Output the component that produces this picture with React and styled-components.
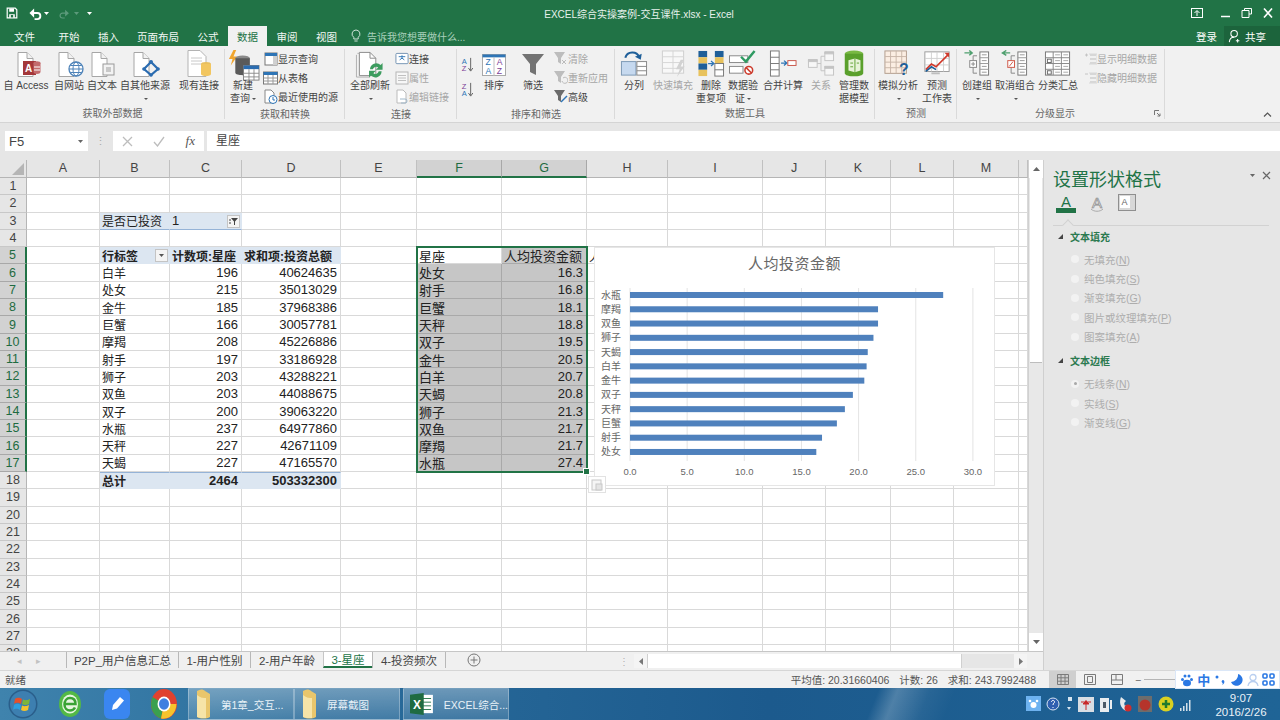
import React from 'react'
import styled, { createGlobalStyle } from 'styled-components'

const Global = createGlobalStyle`
    html, body { margin: 0; padding: 0; background: #e6e6e6; }
    body { font-family: "Liberation Sans", "Noto Sans CJK SC", sans-serif; }
    #root { width: 1280px; height: 720px; overflow: hidden; }
    svg { display: block; }
`

const Page = styled.div`
    width: 1280px;
    height: 720px;
    display: flex;
    flex-direction: column;
    overflow: hidden;
    position: relative;
    color: #262626;
`

// title bar
const TitleBar = styled.header`
    height: 26px;
    flex: none;
    background: #217346;
    display: flex;
    align-items: center;
    color: #fff;
    position: relative;
`
const Quick = styled.div`
    width: 539px;
    flex: none;
    display: flex;
    align-items: center;
    padding-left: 6px;
    box-sizing: border-box;
`
const QuickGap = styled.span`
    width: ${p => p.$w}px;
    flex: none;
`
const DocTitle = styled.div`
    font-size: 10px;
    width: 200px;
    flex: none;
    text-align: center;
    white-space: nowrap;
    color: #e8f1ec;
`
const WinButtons = styled.div`
    margin-left: auto;
    display: flex;
    align-items: center;
    gap: 8px;
    padding-right: 5px;
    & > svg:first-child { margin-right: 6px; }
`

// tabs
const TabRow = styled.nav`
    height: 20px;
    flex: none;
    background: #217346;
    display: flex;
    align-items: stretch;
    color: #fff;
    font-size: 10.5px;
`
const Tab = styled.div`
    width: ${p => p.$w}px;
    display: flex;
    align-items: center;
    justify-content: center;
    background: ${p => (p.$active ? '#f1f1f1' : 'transparent')};
    color: ${p => (p.$active ? '#217346' : '#f2f7f4')};
`
const Tell = styled.div`
    display: flex;
    align-items: center;
    gap: 6px;
    padding-left: 5px;
    font-size: 10px;
    color: #a9d0bb;
`
const TabRight = styled.div`
    margin-left: auto;
    display: flex;
    align-items: stretch;
`
const Login = styled.div`
    display: flex;
    align-items: center;
    padding-right: 7px;
`
const Share = styled.div`
    width: 56px;
    display: flex;
    align-items: center;
    gap: 3px;
    padding-left: 4px;
    box-sizing: border-box;
    background: #1c643c;
`

// ribbon
const Ribbon = styled.div`
    height: 76px;
    flex: none;
    background: #f1f1f1;
    display: flex;
    border-bottom: 1px solid #d4d4d4;
    box-sizing: content-box;
    font-size: 10px;
    color: #444;
    position: relative;
`
const Group = styled.section`
    width: ${p => p.$w}px;
    box-sizing: border-box;
    display: flex;
    flex-direction: column;
    position: relative;
    &::after {
        content: '';
        position: absolute;
        right: 0;
        top: 3px;
        bottom: 3px;
        width: 1px;
        background: #dadada;
    }
`
const GroupBody = styled.div`
    flex: 1;
    display: flex;
    align-items: flex-start;
`
const GroupLabel = styled.div`
    height: 17px;
    line-height: 18px;
    text-align: center;
    color: #666;
    flex: none;
    padding-right: ${p => p.$pr || 0}px;
`
const Big = styled.div`
    width: ${p => p.$w}px;
    flex: none;
    display: flex;
    flex-direction: column;
    align-items: center;
    padding-top: 4px;
    margin-left: ${p => p.$ml || 0}px;
    color: ${p => (p.$off ? '#a6a6a6' : '#444')};
`
const BigIcon = styled.div`
    height: 29px;
    display: flex;
    align-items: ${p => (p.$mid ? 'center' : 'flex-start')};
    justify-content: center;
`
const BigLabel = styled.div`
    line-height: 13px;
    text-align: center;
    white-space: nowrap;
`
const Caret = styled.span`
    display: inline-block;
    width: 0;
    height: 0;
    border-left: 2px solid transparent;
    border-right: 2px solid transparent;
    border-top: 2px solid #555;
    vertical-align: middle;
    margin-left: 2px;
`
const SmallCol = styled.div`
    display: flex;
    flex-direction: column;
    padding-top: 3px;
    margin-left: ${p => p.$ml || 0}px;
`
const Small = styled.div`
    height: 19px;
    display: flex;
    align-items: center;
    white-space: nowrap;
    color: ${p => (p.$off ? '#a6a6a6' : '#444')};
`
const SmallIcon = styled.div`
    width: ${p => p.$w || 15}px;
    flex: none;
    display: flex;
    justify-content: center;
`
const SortCol = styled.div`
    width: 21px;
    margin-left: 0;
    flex: none;
    display: flex;
    flex-direction: column;
    align-items: center;
    gap: 10px;
    padding-top: 11px;
`
const Collapse = styled.div`
    position: absolute;
    right: 8px;
    bottom: 5px;
`
const Launch = styled.div`
    position: absolute;
    right: 4px;
    bottom: 5px;
`

// formula bar
const FormulaBar = styled.div`
    height: 28px;
    flex: none;
    margin-top: 2px;
    background: #e6e6e6;
    display: flex;
    align-items: center;
    padding: 4px 0 0 5px;
    box-sizing: border-box;
    font-size: 13px;
`
const NameBox = styled.div`
    width: 83px;
    height: 20px;
    background: #fff;
    box-sizing: border-box;
    display: flex;
    align-items: center;
    justify-content: space-between;
    padding: 0 5px 0 4px;
    color: #444;
`
const Grip = styled.div`
    width: 25px;
    color: #aaa;
    font-size: 11px;
    text-align: center;
`
const FxBox = styled.div`
    width: 91px;
    height: 20px;
    background: #fff;
    display: flex;
    align-items: center;
    justify-content: space-between;
    padding: 0 9px;
    box-sizing: border-box;
    color: #555;
`
const Fx = styled.i`
    font-family: "Liberation Serif", serif;
    font-size: 13px;
`
const FormulaInput = styled.div`
    flex: 1;
    height: 20px;
    line-height: 20px;
    margin-left: 3px;
    padding-left: 9px;
    background: #fff;
    color: #444;
    font-size: 12px;
`

// work area
const Work = styled.div`
    flex: 1;
    display: flex;
    min-height: 0;
    padding-top: 7px;
    background: #e6e6e6;
`
const LeftCol = styled.div`
    width: 1043px;
    display: flex;
    flex-direction: column;
    flex: none;
`
const SheetRow = styled.div`
    height: 492px;
    flex: none;
    display: flex;
    border-bottom: 1px solid #c6c6c6;
    box-sizing: border-box;
    background: #fff;
`
const columns = '27px 73px 70px 72px 99px 76px 85px 85px 81px 95px 63px 65px 63px 65px 9px'
const rowsTpl = 'repeat(1, 18px) repeat(28, 17.3px)'
const SheetArea = styled.div`
    width: 1028px;
    height: 100%;
    position: relative;
    overflow: hidden;
`
const Cells = styled.div`
    display: grid;
    grid-template-columns: ${columns};
    grid-template-rows: ${rowsTpl};
    font-size: 13px;
`
const Overlay = styled.div`
    position: absolute;
    inset: 0;
    display: grid;
    grid-template-columns: ${columns};
    grid-template-rows: ${rowsTpl};
    pointer-events: none;
`
const Corner = styled.div`
    background: #e6e6e6;
    border-right: 1px solid #b5b5b5;
    border-bottom: 1px solid #b5b5b5;
    box-sizing: border-box;
    display: flex;
    align-items: flex-end;
    justify-content: flex-end;
    padding: 0 2px 2px 0;
`
const ColHead = styled.div`
    background: ${p => (p.$on ? '#d2d2d2' : '#e6e6e6')};
    border-right: 1px solid ${p => (p.$on ? '#a8a8a8' : '#c0c0c0')};
    border-bottom: ${p => (p.$on ? '2px solid #217346' : '1px solid #b5b5b5')};
    box-sizing: border-box;
    text-align: center;
    line-height: 17px;
    font-size: 12.5px;
    color: ${p => (p.$on ? '#1e6b41' : '#444')};
`
const RowHead = styled.div`
    background: ${p => (p.$on ? '#d2d2d2' : '#e6e6e6')};
    border-right: ${p => (p.$on ? '2px solid #217346' : '1px solid #b5b5b5')};
    border-bottom: 1px solid ${p => (p.$on ? '#a8a8a8' : '#c8c8c8')};
    box-sizing: border-box;
    display: flex;
    align-items: center;
    justify-content: center;
    font-size: 12.5px;
    color: ${p => (p.$on ? '#1e6b41' : '#444')};
`
const cellBg = { plain: '#fff', pivot: '#dce6f1', sel: '#c6c6c6' }
const Cell = styled.div`
    box-sizing: border-box;
    position: relative;
    min-width: 0;
    white-space: nowrap;
    display: flex;
    align-items: center;
    justify-content: ${p => (p.$right ? 'flex-end' : 'flex-start')};
    padding: 0 3px 0 2px;
    background: ${p => cellBg[p.$kind || 'plain']};
    font-weight: ${p => (p.$bold ? 700 : 400)};
    font-size: ${p => (p.$small ? '12px' : 'inherit')};
    border-right: 1px solid ${p => (p.$kind === 'sel' ? '#a9a9a9' : p.$kind === 'pivot' ? '#dce6f1' : '#d9d9d9')};
    border-bottom: 1px solid ${p => (p.$line ? '#95b3d7' : p.$kind === 'sel' ? '#a9a9a9' : p.$kind === 'pivot' ? '#dce6f1' : '#d9d9d9')};
    border-top: ${p => (p.$top ? '1px solid #95b3d7' : 'none')};
    color: #222;
`
const DropBtn = styled.span`
    position: absolute;
    right: 1px;
    top: 2px;
    width: 13px;
    height: 13px;
    box-sizing: border-box;
    background: #f4f4f4;
    border: 1px solid #c4c4c4;
    display: flex;
    align-items: center;
    justify-content: center;
`
const Selection = styled.div`
    grid-column: 7 / 9;
    grid-row: 6 / 19;
    border: 2px solid #217346;
    margin: -1px -1px -1px -1px;
    position: relative;
`
const Handle = styled.div`
    position: absolute;
    right: -4px;
    bottom: -4px;
    width: 5px;
    height: 5px;
    background: #217346;
    border: 1px solid #fff;
`
const ChartBox = styled.div`
    position: absolute;
    left: 594px;
    top: 87px;
    width: 401px;
    height: 239px;
    box-sizing: border-box;
    background: #fff;
    border: 1px solid #e6e6e6;
`
const ChartTitle = styled.div`
    height: 31px;
    padding-top: 4px;
    box-sizing: border-box;
    text-align: center;
    font-size: 15px;
    letter-spacing: 0.5px;
    color: #686868;
`
const PasteTag = styled.div`
    position: absolute;
    left: 588px;
    top: 316px;
    width: 18px;
    height: 17px;
    box-sizing: border-box;
    background: #fff;
    border: 1px solid #e2e2e2;
    display: flex;
    align-items: center;
    justify-content: center;
`
const VScroll = styled.div`
    width: 15px;
    flex: none;
    display: flex;
    flex-direction: column;
    background: #e8e8e8;
    border-left: 1px solid #d0d0d0;
    box-sizing: border-box;
`
const ScrollEnd = styled.div`
    height: 18px;
    flex: none;
    display: flex;
    align-items: center;
    justify-content: center;
    background: #fff;
    margin-top: ${p => (p.$end ? 'auto' : 0)};
`
const VThumb = styled.div`
    height: 184px;
    background: #fff;
    margin: 0 1px;
    border-bottom: 1px solid #bdbdbd;
`

// sheet tabs
const TabStrip = styled.div`
    flex: 1;
    display: flex;
    align-items: stretch;
    background: #f0f0f0;
    font-size: 11.5px;
    color: #444;
`
const StripNav = styled.div`
    width: 66px;
    display: flex;
    align-items: center;
    gap: 14px;
    padding-left: 17px;
    box-sizing: border-box;
    color: #c2c2c2;
    font-size: 9px;
`
const SheetTab = styled.div`
    width: ${p => p.$w}px;
    height: 16px;
    display: flex;
    align-items: center;
    justify-content: center;
    box-sizing: border-box;
    white-space: nowrap;
    background: ${p => (p.$active ? '#fff' : 'transparent')};
    color: ${p => (p.$active ? '#217346' : '#444')};
    border-left: 1px solid ${p => (p.$active ? '#c6c6c6' : '#b8b8b8')};
    border-bottom: ${p => (p.$active ? '2px solid #217346' : 'none')};
`
const AddSheet = styled.div`
    width: 57px;
    display: flex;
    align-items: center;
    justify-content: center;
    border-left: 1px solid #b8b8b8;
    height: 16px;
    box-sizing: border-box;
`
const Dots = styled.div`
    margin-left: 112px;
    width: 20px;
    display: flex;
    align-items: center;
    justify-content: center;
    color: #b0b0b0;
    font-size: 10px;
`
const HScroll = styled.div`
    width: 393px;
    margin: 2px 0 2px;
    display: flex;
    align-items: stretch;
    background: #e6e6e6;
`
const HEnd = styled.div`
    width: 13px;
    flex: none;
    display: flex;
    align-items: center;
    justify-content: center;
    background: #f4f4f4;
    margin-left: ${p => (p.$end ? 'auto' : 0)};
`
const HThumb = styled.div`
    width: 315px;
    background: #fff;
    border-left: 1px solid #d0d0d0;
    border-right: 1px solid #d0d0d0;
    box-sizing: border-box;
`

// task pane
const Pane = styled.aside`
    flex: 1;
    background: #e6e6e6;
    border-left: 1px solid #cfcfcf;
    box-sizing: border-box;
    padding: 8px 0 0 9px;
    font-size: 10.5px;
    position: relative;
`
const PaneTitle = styled.h2`
    margin: 0;
    font-size: 18px;
    line-height: 24px;
    font-weight: 400;
    color: #217346;
`
const PaneTools = styled.div`
    position: absolute;
    right: 9px;
    top: 11px;
    display: flex;
    align-items: center;
    gap: 7px;
`
const PaneTabs = styled.div`
    display: flex;
    align-items: flex-start;
    gap: 14px;
    padding: 0 0 0 3px;
    height: 33px;
    box-sizing: border-box;
    margin-top: 1px;
    border-bottom: 1px solid #d2d2d2;
    width: 216px;
    position: relative;
`
const PaneNotch = styled.div`
    position: absolute;
    left: 11px;
    bottom: -4px;
    width: 7px;
    height: 7px;
    background: #e6e6e6;
    border-left: 1px solid #d2d2d2;
    border-top: 1px solid #d2d2d2;
    transform: rotate(45deg);
`
const Section = styled.div`
    padding: 0 0 0 5px;
    margin-top: ${p => p.$mt}px;
`
const SectionHead = styled.div`
    height: 20px;
    margin-bottom: 3.5px;
    display: flex;
    align-items: center;
    gap: 7px;
    font-weight: 700;
    font-size: 10px;
    color: #2b7a50;
`
const Tri = styled.span`
    width: 0;
    height: 0;
    border-left: 5px solid transparent;
    border-bottom: 5px solid #444;
`
const RadioRow = styled.div`
    height: 19.4px;
    display: flex;
    align-items: center;
    gap: 5px;
    padding-left: 13px;
    color: #adadad;
    white-space: nowrap;
`
const Radio = styled.span`
    width: 8px;
    height: 8px;
    border-radius: 50%;
    background: #f2f2f2;
    display: flex;
    align-items: center;
    justify-content: center;
    &::after {
        content: '';
        width: 3px;
        height: 3px;
        border-radius: 50%;
        background: ${p => (p.$on ? '#a8a8a8' : 'transparent')};
    }
`
const Key = styled.u`
    text-underline-offset: 1px;
`

// status bar
const StatusBar = styled.footer`
    height: 17px;
    flex: none;
    background: #f1f1f1;
    border-top: 1px solid #d6d6d6;
    box-sizing: content-box;
    display: flex;
    align-items: center;
    font-size: 10.5px;
    color: #555;
    position: relative;
`
const Ready = styled.div`
    padding-left: 5px;
`
const Stats = styled.div`
    margin-left: auto;
    display: flex;
    gap: 10px;
    white-space: nowrap;
`
const ViewBtns = styled.div`
    display: flex;
    margin-left: 13px;
    width: 231px;
    align-self: stretch;
    align-items: stretch;
`
const ViewBtn = styled.div`
    width: 27px;
    display: flex;
    align-items: center;
    justify-content: center;
    background: ${p => (p.$on ? '#cfcfcf' : 'transparent')};
`
const Zoom = styled.div`
    display: flex;
    align-items: center;
    padding-left: 5px;
    gap: 3px;
    color: #666;
`
const ZoomLine = styled.div`
    width: 33px;
    height: 1px;
    background: #b5b5b5;
`
const Ime = styled.div`
    position: absolute;
    right: 0;
    top: -1px;
    width: 105px;
    height: 19px;
    background: #fff;
    box-sizing: border-box;
    border: 1px solid #dbe7f7;
    display: flex;
    align-items: center;
    justify-content: space-around;
    padding: 0 2px;
    color: #2a78e4;
    font-size: 13px;
    font-weight: 700;
`

// taskbar
const Taskbar = styled.div`
    height: 32px;
    flex: none;
    display: flex;
    align-items: stretch;
    background:
        linear-gradient(112deg, transparent 68%, rgba(255, 255, 255, 0.22) 69.5%, rgba(255, 255, 255, 0.05) 72%, transparent 74%),
        linear-gradient(90deg, #3f83ad 0%, #2a6c9b 25%, #1c5a8d 60%, #1f6496 100%);
    color: #fff;
    font-size: 10.5px;
`
const Pinned = styled.div`
    width: ${p => p.$w}px;
    display: flex;
    align-items: center;
    justify-content: center;
    flex: none;
`
const TaskBtn = styled.div`
    width: ${p => p.$w}px;
    margin-left: ${p => p.$ml || 0}px;
    flex: none;
    display: flex;
    align-items: center;
    gap: 10px;
    padding-left: ${p => p.$pl}px;
    box-sizing: border-box;
    background: linear-gradient(180deg, rgba(255, 255, 255, 0.32), rgba(255, 255, 255, 0.12));
    border: 1px solid rgba(255, 255, 255, 0.28);
    white-space: nowrap;
    color: #e9f2f8;
`
const Tray = styled.div`
    margin-left: auto;
    display: flex;
    align-items: center;
    gap: 5px;
`
const Clock = styled.div`
    width: 78px;
    text-align: center;
    font-size: 11.5px;
    line-height: 14.5px;
    padding-top: 2px;
    margin-left: 6px;
    color: #eaf2f8;
`

// icons
const Save = () => (
    <svg width="12" height="12" viewBox="0 0 15 15"><path d="M1.500 1.500h10l2 2v10h-12z" fill="none" stroke="#fff" strokeWidth="1.500"/><path d="M4 2h6v4H4zM4 9h7v4.500H4z" fill="#fff"/><path d="M6 10h3v3H6z" fill="#217346"/></svg>
)
const Undo = ({ c = '#fff' }) => (
    <svg width="15" height="13" viewBox="0 0 16 14"><path d="M3 6.500h7a3.200 3.200 0 0 1 0 6.500H7" fill="none" stroke={c} strokeWidth="2"/><path d="M6.500 1.500L1.500 6.500l5 5z" fill={c}/></svg>
)
const Redo = ({ c = '#5c9a7b' }) => (
    <svg width="12" height="11" viewBox="0 0 16 14"><path d="M13 6.500H6a3.200 3.200 0 0 0 0 6.500h3" fill="none" stroke={c} strokeWidth="1.600"/><path d="M9.500 2l5 4.500-5 4.500z" fill={c}/></svg>
)
const TinyCaret = ({ c = '#fff' }) => (
    <svg width="5" height="3" viewBox="0 0 5 3"><path d="M0 0h5L2.500 3z" fill={c}/></svg>
)
const Bulb = () => (
    <svg width="10" height="14" viewBox="0 0 10 14"><path d="M5 1a4 4 0 0 0-2.200 7.300V10h4.400V8.300A4 4 0 0 0 5 1zM3.400 12h3.200" fill="none" stroke="#cfe3d8"/></svg>
)
const ShareUser = () => (
    <svg width="14" height="14" viewBox="0 0 16 16"><circle cx="7" cy="5.500" r="3.700" fill="none" stroke="#fff" strokeWidth="1.200"/><path d="M1.500 15c.3-3.500 2.500-5.500 5.500-5.500M11 11.500v4M9 13.500h4" fill="none" stroke="#fff" strokeWidth="1.200"/></svg>
)
const Page32 = ({ children, w = 32 }) => (
    <svg width={w} height="27" viewBox={`0 0 ${w} 27`}>
        <path d="M8 2.500h9l6 6v18H8z" fill="#fff" stroke="#a6a6a6"/>
        <path d="M17 2.500v6h6" fill="#f2f2f2" stroke="#a6a6a6"/>
        {children}
    </svg>
)
const AccessIcon = () => (
    <Page32>
        <rect x="13" y="11" width="13" height="14" fill="#a4373a"/>
        <text x="15" y="22" fontSize="10" fontWeight="700" fill="#fff" fontFamily="Liberation Sans">A</text>
        <ellipse cx="27" cy="13" rx="3.500" ry="1.800" fill="#c36b6d"/>
        <path d="M23.500 13v9c0 2.500 7 2.500 7 0V13" fill="#c36b6d"/>
        <path d="M24 17h6M24 20h6" stroke="#fff"/>
    </Page32>
)
const WebIcon = () => (
    <Page32 w={36}>
        <circle cx="25" cy="19" r="7" fill="#fff" stroke="#4d82b8" strokeWidth="1.300"/>
        <ellipse cx="25" cy="19" rx="3" ry="7" fill="none" stroke="#4d82b8"/>
        <path d="M18 19h14M19.500 15.500h11M19.500 22.500h11" stroke="#4d82b8"/>
    </Page32>
)
const TextIcon = () => (
    <Page32 w={36}>
        <rect x="19" y="14" width="11" height="11" fill="#f3f3f3" stroke="#9a9a9a"/>
        <rect x="22" y="17" width="5" height="5" fill="#c8c8c8"/>
    </Page32>
)
const OtherIcon = () => (
    <Page32 w={38}>
        <path d="M25 12l7 7-7 6-7-6z" fill="none" stroke="#2b6cb0" strokeWidth="2.200"/>
        <circle cx="25" cy="12" r="2" fill="#2b6cb0"/><circle cx="25" cy="25" r="1.800" fill="#2b6cb0"/>
        <circle cx="18" cy="19" r="1.800" fill="#2b6cb0"/><circle cx="32" cy="19" r="1.800" fill="#2b6cb0"/>
    </Page32>
)
const ExistingIcon = () => (
    <svg width="30" height="27" viewBox="0 0 30 27">
        <path d="M4 0.500h12l6 6v20H4z" fill="#fff" stroke="#b3b3b3"/>
        <path d="M7 8h11M7 11h11M7 14h11" stroke="#c8c8c8"/>
        <ellipse cx="22" cy="14" rx="5" ry="2" fill="#e8bf5f"/>
        <path d="M17 14v10c0 2.700 10 2.700 10 0V14" fill="#f2c660"/>
    </svg>
)
const NewQueryIcon = () => (
    <svg width="33" height="31" viewBox="0 0 36 34">
        <path d="M7 0L2 10h4l-2 7 7-10H7l3-7z" fill="#f0a52d"/>
        <ellipse cx="17" cy="9" rx="8" ry="3" fill="#8a8a8a"/>
        <path d="M9 9v16c0 3.500 16 3.500 16 0V9" fill="#5a5a5a"/>
        <rect x="18" y="17" width="17" height="16" fill="#fff" stroke="#7d7d7d"/>
        <rect x="18" y="17" width="17" height="4" fill="#2b6cb0"/>
        <path d="M18 25.500h17M18 29.500h17M24 21v12M29.500 21v12" stroke="#8a8a8a"/>
    </svg>
)
const ShowQ = () => (
    <svg width="14" height="14" viewBox="0 0 14 14"><rect x="1" y="1" width="12" height="12" fill="#fff" stroke="#777"/><rect x="1" y="1" width="12" height="3" fill="#2e75b6"/><rect x="9" y="4" width="4" height="9" fill="#d0d0d0"/></svg>
)
const TableI = () => (
    <svg width="15" height="14" viewBox="0 0 15 14"><rect x="0.500" y="1" width="14" height="12" fill="#fff" stroke="#777"/><rect x="0.500" y="1" width="14" height="3" fill="#2e75b6"/><path d="M0.500 7h14M0.500 10h14M5 4v9M10 4v9" stroke="#999"/></svg>
)
const RecentI = () => (
    <svg width="15" height="15" viewBox="0 0 15 15"><path d="M2 1h6l3 3v10H2z" fill="#fff" stroke="#888"/><circle cx="10" cy="10.500" r="4" fill="#fff" stroke="#2e75b6"/><path d="M10 8v3h2" fill="none" stroke="#2e75b6"/></svg>
)
const RefreshIcon = () => (
    <svg width="34" height="29" viewBox="0 0 34 30">
        <path d="M6 2.500h11l6 6v18H6z" fill="#fff" stroke="#8a8a8a"/>
        <path d="M3 5v23h14M4 3.500h2" fill="none" stroke="#b0b0b0"/>
        <path d="M17 2.500v6h6" fill="none" stroke="#8a8a8a"/>
        <path d="M17 20a6.500 6.500 0 0 1 11-4.500l2-2v7h-7l2.500-2.500a3.500 3.500 0 0 0-5.500 2z" fill="#3d9c5f"/>
        <path d="M29 22a6.500 6.500 0 0 1-11 4.500l-2 2v-7h7l-2.500 2.500a3.500 3.500 0 0 0 5.500-2z" fill="#3d9c5f"/>
    </svg>
)
const ConnI = () => (
    <svg width="15" height="14" viewBox="0 0 15 14"><rect x="1" y="1" width="13" height="11" rx="1" fill="#fff" stroke="#6f8fb0"/><path d="M4 4.500h7M7.500 3v3.500M5 8l2.500-2L10 8" fill="none" stroke="#2e75b6"/></svg>
)
const PropI = () => (
    <svg width="14" height="14" viewBox="0 0 14 14"><rect x="1" y="1" width="12" height="12" fill="#f7f7f7" stroke="#b6b6b6"/><path d="M3 4.500h8M3 7h8M3 9.500h8" stroke="#c0c0c0"/></svg>
)
const EditLinkI = () => (
    <svg width="14" height="15" viewBox="0 0 14 15"><path d="M2 1h6l3 3v10H2z" fill="#fff" stroke="#bbb"/><path d="M5 10h5a2 2 0 0 1 0 4H6" fill="none" stroke="#9fb7c9"/></svg>
)
const SortI = ({ a, b, ca, cb }) => (
    <svg width="14" height="15" viewBox="0 0 14 17" fontFamily="Liberation Sans" fontSize="8.500">
        <text x="0" y="7.500" fill={ca}>{a}</text>
        <text x="0" y="16" fill={cb}>{b}</text>
        <path d="M10 1v14M7.500 12.500L10 16l2.500-3.500" fill="none" stroke="#555"/>
    </svg>
)
const SortBig = () => (
    <svg width="24" height="22" viewBox="0 0 25 23" fontFamily="Liberation Sans" fontSize="9">
        <rect x="0.500" y="0.500" width="24" height="22" fill="#fff" stroke="#a6a6a6"/>
        <rect x="0.500" y="0.500" width="24" height="3" fill="#2e75b6"/>
        <path d="M12.500 3v20" stroke="#bbb"/>
        <text x="3.500" y="12" fill="#2e75b6">Z</text><text x="3.500" y="21" fill="#2e75b6">A</text>
        <text x="15.500" y="12" fill="#7c3f98">A</text><text x="15.500" y="21" fill="#7c3f98">Z</text>
    </svg>
)
const FunnelBig = () => (
    <svg width="22" height="23" viewBox="0 0 22 23"><path d="M0 1h22L14 11v11l-6-3v-8z" fill="#737373"/></svg>
)
const FunnelS = ({ c = '#bdbdbd', mark }) => (
    <svg width="15" height="15" viewBox="0 0 15 15"><path d="M1 1h11L8 7v6l-3-2V7z" fill={c}/>{mark}</svg>
)
const SplitI = () => (
    <svg width="28" height="28" viewBox="0 0 28 29">
        <path d="M5 8c2-7 12-7 14-1" fill="none" stroke="#1f5f99" strokeWidth="2.200"/><path d="M15 7l6 3 1-6z" fill="#1f5f99"/>
        <rect x="1" y="12" width="15" height="14" fill="#c6d9ef" stroke="#7d99b5"/>
        <rect x="17" y="12" width="10" height="14" fill="#fff" stroke="#888"/>
        <path d="M17 17h10M17 21.500h10" stroke="#888"/>
    </svg>
)
const FlashI = () => (
    <svg width="28" height="28" viewBox="0 0 28 29">
        <rect x="3" y="1" width="22" height="23" fill="#f8f8f8" stroke="#cfcfcf"/>
        <path d="M3 7h22M3 13h22M3 19h22M14 1v23" stroke="#d6d6d6"/>
        <path d="M22 10l-5 10h4l-3 8 8-11h-4l3-7z" fill="#d2d2d2"/>
    </svg>
)
const DedupI = () => (
    <svg width="28" height="28" viewBox="0 0 28 29">
        <rect x="1" y="1" width="9" height="6.500" fill="#1f5f99"/><rect x="1" y="7.500" width="9" height="6.500" fill="#e8c25c"/>
        <rect x="1" y="14" width="9" height="6.500" fill="#1f5f99"/><rect x="1" y="20.500" width="9" height="6.500" fill="#e8c25c"/>
        <rect x="18" y="1" width="9" height="6.500" fill="#1f5f99"/><rect x="18" y="7.500" width="9" height="6.500" fill="#e8c25c"/>
        <rect x="18" y="14" width="9" height="13" fill="#fff" stroke="#777"/><path d="M18 20.500h9" stroke="#777"/>
        <path d="M11 14h5M14 11.500l3 2.500-3 2.500" fill="none" stroke="#2e75b6" strokeWidth="1.300"/>
    </svg>
)
const ValidI = () => (
    <svg width="30" height="28" viewBox="0 0 30 29">
        <rect x="1" y="6" width="19" height="7" fill="#fff" stroke="#888"/><rect x="1" y="17" width="14" height="7" fill="#fff" stroke="#888"/>
        <path d="M13 7l5 5 9-11" fill="none" stroke="#2f9a62" strokeWidth="2.500"/>
        <circle cx="21" cy="21" r="4" fill="#fff" stroke="#cc3b2c" strokeWidth="1.600"/><path d="M18 18l6 6" stroke="#cc3b2c" strokeWidth="1.600"/>
    </svg>
)
const MergeI = () => (
    <svg width="28" height="28" viewBox="0 0 28 29">
        <rect x="1" y="1" width="9" height="26" fill="#fff" stroke="#777"/><path d="M1 7.500h9M1 14h9M1 20.500h9" stroke="#777"/>
        <path d="M12 13.500h5M15 11l3 2.500-3 2.500" fill="none" stroke="#2e75b6" strokeWidth="1.300"/>
        <rect x="19" y="11" width="8.500" height="5" fill="#fff" stroke="#c8564a"/>
    </svg>
)
const RelI = () => (
    <svg width="28" height="28" viewBox="0 0 28 29" stroke="#c4c4c4" fill="#f7f7f7">
        <rect x="1" y="10" width="9" height="8"/><rect x="18" y="2" width="9" height="9"/><rect x="18" y="17" width="9" height="9"/>
        <path d="M10 14h4V6.500h4M14 14v7.500h4" fill="none"/>
        <path d="M1 10h9v2H1zM18 2h9v2h-9zM18 17h9v2h-9z" fill="#c4c4c4"/>
    </svg>
)
const ModelI = () => (
    <svg width="24" height="28" viewBox="0 0 26 30">
        <ellipse cx="13" cy="4" rx="10" ry="3.500" fill="#79b943"/>
        <path d="M3 4v21c0 4.500 20 4.500 20 0V4" fill="#5aa02c"/>
        <path d="M7 11l7-2 6 2v11l-6 2-7-2z" fill="#e7f3d9"/><path d="M14 9v15M9 14h3M9 18h3M16 14h2.500" stroke="#5aa02c"/>
    </svg>
)
const WhatIfI = () => (
    <svg width="30" height="28" viewBox="0 0 32 30" fontFamily="Liberation Sans">
        <rect x="2" y="1" width="23" height="24" fill="#fbeee3" stroke="#b09a8a"/>
        <path d="M2 7h23M2 13h23M2 19h23M8 1v24M14 1v24M20 1v24" stroke="#c7b5a8"/>
        <text x="17" y="27" fontSize="17" fontWeight="700" fill="#1f5f99">?</text>
    </svg>
)
const ForecastI = () => (
    <svg width="28" height="28" viewBox="0 0 28 30">
        <rect x="1" y="2" width="26" height="21" fill="#fff" stroke="#9a9a9a"/>
        <path d="M1 9h26M1 16h26M8 2v21M14 2v21M21 2v21" stroke="#d0d0d0"/>
        <path d="M2 21l6-6 5 3 13-13" fill="none" stroke="#d0392b" strokeWidth="1.800"/><path d="M2 23l6-5 5 3" fill="none" stroke="#1f5f99" strokeWidth="1.800"/>
        <path d="M22 3h5v5z" fill="#d0392b"/><path d="M8 24h9v2H8z" fill="#bdbdbd"/>
    </svg>
)
const OutlineCol = ({ x = 17 }) => (
    <g>
        <rect x={x} y="2" width="9" height="24" fill="#fff" stroke="#777"/>
        <path d={`M${x} 8h9M${x} 14h9M${x} 20h9M${x + 2} 5h5M${x + 2} 11h5M${x + 2} 17h5M${x + 2} 23h5`} stroke="#999"/>
    </g>
)
const GroupI = () => (
    <svg width="28" height="28" viewBox="0 0 28 29">
        <path d="M1 3h7M6 0.500L9 3 6 5.500" fill="none" stroke="#4fa06f" strokeWidth="1.500"/>
        <path d="M10 6h4M10 6v18h4" fill="none" stroke="#888"/>
        <rect x="6.500" y="11" width="7" height="7" fill="#fff" stroke="#888"/><path d="M8 14.500h4M10 12.500v4" stroke="#888"/>
        <OutlineCol/>
    </svg>
)
const UngroupI = () => (
    <svg width="28" height="28" viewBox="0 0 28 29">
        <path d="M9 3H2M5 0.500L1 3l4 2.500" fill="none" stroke="#4fa06f" strokeWidth="1.500"/>
        <path d="M10 6h4M10 6v18h4" fill="none" stroke="#888"/>
        <rect x="6.500" y="11" width="7" height="7" fill="#fff" stroke="#d05a4a"/><path d="M8 17l4-5" stroke="#d05a4a"/>
        <OutlineCol/>
    </svg>
)
const SubtotalI = () => (
    <svg width="28" height="28" viewBox="0 0 28 29">
        <rect x="1" y="2" width="25" height="24" fill="#fff" stroke="#777"/>
        <path d="M1 8h25M1 14h25M1 20h25M9 2v24M17.500 2v24" stroke="#888"/>
        <path d="M11 5h5M19.500 5h5M11 11h5M19.500 11h5M11 17h5M19.500 17h5M11 23h5M19.500 23h5" stroke="#aaa"/>
        <rect x="3" y="9.500" width="4" height="3.500" fill="none" stroke="#666"/><rect x="3" y="21.500" width="4" height="3.500" fill="none" stroke="#666"/>
    </svg>
)
const DetailI = ({ plus }) => (
    <svg width="12" height="12" viewBox="0 0 12 12"><path d={plus ? 'M0 2h3M1.500 0.500v3' : 'M0 2h3'} stroke="#c4c4c4"/><path d="M5 2h6M5 6h6M5 10h6" stroke="#bdbdbd"/><path d="M4 1h8v10H4" fill="none" stroke="#d8d8d8"/></svg>
)
const Launcher = () => (
    <svg width="7" height="7" viewBox="0 0 7 7"><path d="M0.500 5V0.500H5M3 3l3 3M6 3.500V6H3.500" fill="none" stroke="#777"/></svg>
)
const FunnelTiny = () => (
    <svg width="9" height="9" viewBox="0 0 9 9"><path d="M2 1h7L6 4.500V8H5V4.500z" fill="#444"/><path d="M0 3h2M0 6h2" stroke="#444"/></svg>
)
const PaneA = () => (
    <svg width="20" height="20" viewBox="0 0 20 20" fontFamily="Liberation Sans"><text x="10" y="14" textAnchor="middle" fontSize="15" fill="#217346">A</text><rect x="0" y="15" width="20" height="5" fill="#217346"/></svg>
)
const PaneB = () => (
    <svg width="14" height="20" viewBox="0 0 14 20" fontFamily="Liberation Sans"><text x="7" y="15" textAnchor="middle" fontSize="15" fill="#fff" stroke="#8a8a8a" strokeWidth="0.700">A</text><path d="M1 16c3 3 9 3 12 0" fill="none" stroke="#aaa"/></svg>
)
const PaneC = () => (
    <svg width="18" height="18" viewBox="0 0 18 18" fontFamily="Liberation Sans"><rect x="0.500" y="1.500" width="17" height="16" fill="#d8d8d8" stroke="#8f8f8f"/><rect x="2" y="3" width="10" height="12" fill="#fff"/><text x="3.500" y="12" fontSize="9" fill="#666">A</text></svg>
)
const OrbIcon = () => (
    <svg width="30" height="30" viewBox="0 0 30 30">
        <circle cx="15" cy="15" r="14.500" fill="#2a5e8a"/>
        <circle cx="15" cy="15" r="13" fill="#3d7fb0"/>
        <path d="M7 10c3-2 5-1 7 0l-1 5c-2-1-4-2-7 0z" fill="#e8502a"/>
        <path d="M15 10.500c2 1 4 1 7-.5l-1 5c-3 1.500-5 1-7 0z" fill="#7db53a"/>
        <path d="M6 16c3-2 5-1 7 0l-1 5c-2-1-4-2-7 0z" fill="#2d9fe0"/>
        <path d="M14 16.500c2 1 4 1 7-.5l-1 5c-3 1.500-5 1-7 0z" fill="#f5c32c"/>
    </svg>
)
const IeIcon = () => (
    <svg width="24" height="28" viewBox="0 0 24 28">
        <ellipse cx="12" cy="14" rx="11" ry="13" fill="#53b946"/>
        <ellipse cx="12" cy="14" rx="8" ry="9.500" fill="#e7f5e0"/>
        <path d="M6.500 14h11c0-4-2-6-5.500-6s-5.500 3-5.500 6.500 2.500 6 5.500 6c2 0 4-1 5-3" fill="none" stroke="#3aa334" strokeWidth="2.500"/>
    </svg>
)
const NoteIcon = () => (
    <svg width="26" height="30" viewBox="0 0 26 30">
        <rect x="0" y="0" width="26" height="30" rx="6" fill="#3a86f0"/>
        <path d="M8 21l1-5 7-8 4 3.500-7 8z" fill="#fff"/>
    </svg>
)
const ChromeIcon = () => (
    <svg width="26" height="30" viewBox="0 0 26 30">
        <ellipse cx="13" cy="15" rx="13" ry="15" fill="#e0412f"/>
        <path d="M13 15L1.500 8A13 15 0 0 0 10 29.500z" fill="#3aa04f"/>
        <path d="M13 15h12.500A13 15 0 0 1 10 29.500z" fill="#f7c32c"/>
        <ellipse cx="13" cy="15" rx="6.500" ry="7.500" fill="#fff"/>
        <ellipse cx="13" cy="15" rx="5" ry="5.800" fill="#3f7fe0"/>
    </svg>
)
const FolderIcon = () => (
    <svg width="15" height="30" viewBox="0 0 15 30">
        <path d="M1 2c3-2 6-2 8 0l5 3v23c-4 2-9 2-13 0z" fill="#e9c66c"/>
        <path d="M1 6c4 3 6 3 9 3v20c-4 0-7 0-9-1z" fill="#f6e4a8"/>
    </svg>
)
const ExcelIcon = () => (
    <svg width="26" height="24" viewBox="0 0 26 24" fontFamily="Liberation Sans">
        <rect x="8" y="2" width="17" height="20" fill="#fff"/><path d="M14 6h9M14 10h9M14 14h9M14 18h9" stroke="#217346"/>
        <path d="M0 2l15-2v24L0 22z" fill="#1f6b41"/>
        <text x="7.500" y="17" textAnchor="middle" fontSize="13" fontWeight="700" fill="#fff">X</text>
    </svg>
)
const TrayI = ({ children, w = 14 }) => <svg width={w} height="18" viewBox={`0 0 ${w} 18`}>{children}</svg>

// data
const bigData = [
    ['白羊', 196, 40624635], ['处女', 215, 35013029], ['金牛', 185, 37968386], ['巨蟹', 166, 30057781],
    ['摩羯', 208, 45226886], ['射手', 197, 33186928], ['狮子', 203, 43288221], ['双鱼', 203, 44088675],
    ['双子', 200, 39063220], ['水瓶', 237, 64977860], ['天秤', 227, 42671109], ['天蝎', 227, 47165570],
]
const avgData = [
    ['处女', '16.3'], ['射手', '16.8'], ['巨蟹', '18.1'], ['天秤', '18.8'], ['双子', '19.5'], ['金牛', '20.5'],
    ['白羊', '20.7'], ['天蝎', '20.8'], ['狮子', '21.3'], ['双鱼', '21.7'], ['摩羯', '21.7'], ['水瓶', '27.4'],
]
const colNames = 'ABCDEFGHIJKLMN'.split('')
const cellMap = {
    B3: { t: '是否已投资', kind: 'pivot', line: true, small: true },
    C3: { t: '1', kind: 'pivot', line: true, btn: <FunnelTiny/> },
    B5: { t: '行标签', kind: 'pivot', bold: true, small: true, btn: <TinyCaret c="#555"/> },
    C5: { t: '计数项:星座', kind: 'pivot', bold: true, small: true },
    D5: { t: '求和项:投资总额', kind: 'pivot', bold: true, small: true },
    F5: { t: '星座' },
    G5: { t: '人均投资金额', kind: 'sel' },
    H5: { t: '人均投资金额' },
    B18: { t: '总计', kind: 'pivot', bold: true, top: true, small: true },
    C18: { t: '2464', kind: 'pivot', bold: true, right: true, top: true },
    D18: { t: '503332300', kind: 'pivot', bold: true, right: true, top: true },
}
bigData.forEach((d, i) => {
    cellMap[`B${i + 6}`] = { t: d[0], small: true }
    cellMap[`C${i + 6}`] = { t: d[1], right: true }
    cellMap[`D${i + 6}`] = { t: d[2], right: true }
})
avgData.forEach((d, i) => {
    cellMap[`F${i + 6}`] = { t: d[0], kind: 'sel' }
    cellMap[`G${i + 6}`] = { t: d[1], kind: 'sel', right: true }
})

function Sheet() {
    const rows = []
    for (let r = 1; r <= 28; r++) {
        const on = r >= 5 && r <= 17
        rows.push(<RowHead key={`h${r}`} $on={on}>{r}</RowHead>)
        colNames.forEach(c => {
            const cell = cellMap[`${c}${r}`] || {}
            rows.push(
                <Cell key={`${c}${r}`} $kind={cell.kind} $bold={cell.bold} $right={cell.right} $line={cell.line} $top={cell.top} $small={cell.small}>
                    {cell.t}
                    {cell.btn && <DropBtn>{cell.btn}</DropBtn>}
                </Cell>
            )
        })
    }
    return (
        <Cells>
            <Corner><svg width="12" height="12" viewBox="0 0 12 12"><path d="M12 0v12H0z" fill="#b5b5b5"/></svg></Corner>
            {colNames.map(c => <ColHead key={c} $on={c === 'F' || c === 'G'}>{c === 'N' ? '' : c}</ColHead>)}
            {rows}
        </Cells>
    )
}

const chartData = avgData.slice().reverse()
const xAt = v => 630 + v * 11.43

function BarChart() {
    return (
        <svg width="399" height="206" viewBox="595 279 399 206" fontFamily="Liberation Sans, Noto Sans CJK SC, sans-serif">
            {[0, 5, 10, 15, 20, 25, 30].map(v => (
                <g key={v}>
                    <path d={`M${xAt(v)} 288V461`} stroke="#e4e4e4"/>
                    <text x={xAt(v)} y="475" fontSize="9.500" fill="#666" textAnchor="middle">{v.toFixed(1)}</text>
                </g>
            ))}
            {chartData.map((d, i) => {
                const y = 295 + i * 14.27
                return (
                    <g key={d[0]}>
                        <rect x="630" y={y - 3} width={d[1] * 11.43} height="6" fill="#4f81bd"/>
                        <text x="621" y={y + 3.500} fontSize="10" fill="#666" textAnchor="end">{d[0]}</text>
                    </g>
                )
            })}
        </svg>
    )
}

export default function App() {
    return (
        <Page>
            <Global/>
            <TitleBar>
                <Quick>
                    <Save/>
                    <QuickGap $w={10}/>
                    <Undo/>
                    <QuickGap $w={1}/>
                    <TinyCaret/>
                    <QuickGap $w={9}/>
                    <Redo/>
                    <QuickGap $w={4}/>
                    <TinyCaret c="#5c9a7b"/>
                    <QuickGap $w={8}/>
                    <TinyCaret/>
                </Quick>
                <DocTitle>EXCEL综合实操案例-交互课件.xlsx - Excel</DocTitle>
                <WinButtons>
                    <svg width="12" height="10" viewBox="0 0 12 10"><rect x="0.500" y="0.500" width="11" height="9" fill="none" stroke="#fff"/><path d="M6 8V3M3.500 5L6 2.500 8.500 5" fill="none" stroke="#fff"/></svg>
                    <svg width="16" height="10" viewBox="0 0 16 10"><path d="M4 8.500h9" stroke="#fff" strokeWidth="1.500"/></svg>
                    <svg width="12" height="10" viewBox="0 0 12 10"><path d="M3.500 2.500V0.500h7v5.500H8M1 2.500h7v7H1z" fill="none" stroke="#fff"/></svg>
                    <svg width="14" height="10" viewBox="0 0 14 10"><path d="M3 0.500l8 9M11 0.500l-8 9" stroke="#fff" strokeWidth="1.600"/></svg>
                </WinButtons>
            </TitleBar>
            <TabRow>
                <Tab $w={49}>文件</Tab>
                <Tab $w={40}>开始</Tab>
                <Tab $w={39}>插入</Tab>
                <Tab $w={60}>页面布局</Tab>
                <Tab $w={40}>公式</Tab>
                <Tab $w={39} $active>数据</Tab>
                <Tab $w={40}>审阅</Tab>
                <Tab $w={39}>视图</Tab>
                <Tell><Bulb/>告诉我您想要做什么...</Tell>
                <TabRight>
                    <Login>登录</Login>
                    <Share><ShareUser/>共享</Share>
                </TabRight>
            </TabRow>
            <Ribbon>
                <Group $w={225}>
                    <GroupBody>
                        <Big $w={52}><BigIcon><AccessIcon/></BigIcon><BigLabel>自 Access</BigLabel></Big>
                        <Big $w={34}><BigIcon><WebIcon/></BigIcon><BigLabel>自网站</BigLabel></Big>
                        <Big $w={32}><BigIcon><TextIcon/></BigIcon><BigLabel>自文本</BigLabel></Big>
                        <Big $w={54}><BigIcon><OtherIcon/></BigIcon><BigLabel>自其他来源<br/><Caret/></BigLabel></Big>
                        <Big $w={42} $ml={6}><BigIcon><ExistingIcon/></BigIcon><BigLabel>现有连接</BigLabel></Big>
                    </GroupBody>
                    <GroupLabel>获取外部数据</GroupLabel>
                </Group>
                <Group $w={120}>
                    <GroupBody>
                        <Big $w={36}><BigIcon><NewQueryIcon/></BigIcon><BigLabel>新建<br/>查询<Caret/></BigLabel></Big>
                        <SmallCol $ml={2}>
                            <Small><SmallIcon><ShowQ/></SmallIcon>显示查询</Small>
                            <Small><SmallIcon><TableI/></SmallIcon>从表格</Small>
                            <Small><SmallIcon><RecentI/></SmallIcon>最近使用的源</Small>
                        </SmallCol>
                    </GroupBody>
                    <GroupLabel>获取和转换</GroupLabel>
                </Group>
                <Group $w={112}>
                    <GroupBody>
                        <Big $w={50}><BigIcon><RefreshIcon/></BigIcon><BigLabel>全部刷新<br/><Caret/></BigLabel></Big>
                        <SmallCol>
                            <Small><SmallIcon $w={14}><ConnI/></SmallIcon>连接</Small>
                            <Small $off><SmallIcon $w={14}><PropI/></SmallIcon>属性</Small>
                            <Small $off><SmallIcon $w={14}><EditLinkI/></SmallIcon>编辑链接</Small>
                        </SmallCol>
                    </GroupBody>
                    <GroupLabel>连接</GroupLabel>
                </Group>
                <Group $w={158}>
                    <GroupBody>
                        <SortCol>
                            <SortI a="A" b="Z" ca="#2e75b6" cb="#7c3f98"/>
                            <SortI a="Z" b="A" ca="#7c3f98" cb="#2e75b6"/>
                        </SortCol>
                        <Big $w={32}><BigIcon $mid><SortBig/></BigIcon><BigLabel>排序</BigLabel></Big>
                        <Big $w={34} $ml={6}><BigIcon $mid><FunnelBig/></BigIcon><BigLabel>筛选</BigLabel></Big>
                        <SmallCol $ml={3}>
                            <Small $off><SmallIcon><FunnelS mark={<path d="M9 9l4 4M13 9l-4 4" stroke="#bbb"/>}/></SmallIcon>清除</Small>
                            <Small $off><SmallIcon><FunnelS mark={<path d="M9 11a3 3 0 1 0 1-3" fill="none" stroke="#bbb"/>}/></SmallIcon>重新应用</Small>
                            <Small><SmallIcon><FunnelS c="#6b6b6b" mark={<path d="M8 13l6-6" stroke="#2e75b6" strokeWidth="1.500"/>}/></SmallIcon>高级</Small>
                        </SmallCol>
                    </GroupBody>
                    <GroupLabel>排序和筛选</GroupLabel>
                </Group>
                <Group $w={260}>
                    <GroupBody>
                        <Big $w={38}><BigIcon><SplitI/></BigIcon><BigLabel>分列</BigLabel></Big>
                        <Big $w={40} $off><BigIcon><FlashI/></BigIcon><BigLabel>快速填充</BigLabel></Big>
                        <Big $w={36}><BigIcon><DedupI/></BigIcon><BigLabel>删除<br/>重复项</BigLabel></Big>
                        <Big $w={28}><BigIcon><ValidI/></BigIcon><BigLabel>数据验<br/>证<Caret/></BigLabel></Big>
                        <Big $w={52}><BigIcon><MergeI/></BigIcon><BigLabel>合并计算</BigLabel></Big>
                        <Big $w={24} $off><BigIcon><RelI/></BigIcon><BigLabel>关系</BigLabel></Big>
                        <Big $w={42}><BigIcon><ModelI/></BigIcon><BigLabel>管理数<br/>据模型</BigLabel></Big>
                    </GroupBody>
                    <GroupLabel>数据工具</GroupLabel>
                </Group>
                <Group $w={82}>
                    <GroupBody>
                        <Big $w={46}><BigIcon><WhatIfI/></BigIcon><BigLabel>模拟分析<br/><Caret/></BigLabel></Big>
                        <Big $w={32}><BigIcon><ForecastI/></BigIcon><BigLabel>预测<br/>工作表</BigLabel></Big>
                    </GroupBody>
                    <GroupLabel>预测</GroupLabel>
                </Group>
                <Group $w={208}>
                    <GroupBody>
                        <Big $w={40}><BigIcon><GroupI/></BigIcon><BigLabel>创建组<br/><Caret/></BigLabel></Big>
                        <Big $w={36}><BigIcon><UngroupI/></BigIcon><BigLabel>取消组合<br/><Caret/></BigLabel></Big>
                        <Big $w={50}><BigIcon><SubtotalI/></BigIcon><BigLabel>分类汇总</BigLabel></Big>
                        <SmallCol $ml={2}>
                            <Small $off><SmallIcon $w={12}><DetailI plus/></SmallIcon>显示明细数据</Small>
                            <Small $off><SmallIcon $w={12}><DetailI/></SmallIcon>隐藏明细数据</Small>
                        </SmallCol>
                    </GroupBody>
                    <GroupLabel $pr={12}>分级显示</GroupLabel>
                    <Launch><Launcher/></Launch>
                </Group>
                <Collapse><svg width="9" height="5" viewBox="0 0 9 5"><path d="M1 4.500l3.500-3.500L8 4.500" fill="none" stroke="#555" strokeWidth="1.200"/></svg></Collapse>
            </Ribbon>
            <FormulaBar>
                <NameBox>F5<TinyCaret c="#666"/></NameBox>
                <Grip>⋮</Grip>
                <FxBox>
                    <svg width="11" height="11" viewBox="0 0 11 11"><path d="M1 1l9 9M10 1l-9 9" stroke="#bdbdbd" strokeWidth="1.300"/></svg>
                    <svg width="12" height="11" viewBox="0 0 12 11"><path d="M1 6l3.500 4L11 1" fill="none" stroke="#bdbdbd" strokeWidth="1.300"/></svg>
                    <Fx>fx</Fx>
                </FxBox>
                <FormulaInput>星座</FormulaInput>
            </FormulaBar>
            <Work>
                <LeftCol>
                    <SheetRow>
                        <SheetArea>
                            <Sheet/>
                            <Overlay>
                                <Selection><Handle/></Selection>
                                <ChartBox>
                                    <ChartTitle>人均投资金额</ChartTitle>
                                    <BarChart/>
                                </ChartBox>
                                <PasteTag>
                                    <svg width="12" height="12" viewBox="0 0 12 12"><rect x="1" y="1" width="9" height="10" fill="#f5f5f5" stroke="#c8c8c8"/><rect x="5" y="5" width="6" height="6" fill="#e4e4e4" stroke="#c8c8c8"/></svg>
                                </PasteTag>
                            </Overlay>
                        </SheetArea>
                        <VScroll>
                            <ScrollEnd><svg width="7" height="4" viewBox="0 0 7 4"><path d="M3.500 0L7 4H0z" fill="#666"/></svg></ScrollEnd>
                            <VThumb/>
                            <ScrollEnd $end><svg width="7" height="4" viewBox="0 0 7 4"><path d="M3.500 4L7 0H0z" fill="#666"/></svg></ScrollEnd>
                        </VScroll>
                    </SheetRow>
                    <TabStrip>
                        <StripNav><span>◂</span><span>▸</span></StripNav>
                        <SheetTab $w={112}>P2P_用户信息汇总</SheetTab>
                        <SheetTab $w={72}>1-用户性别</SheetTab>
                        <SheetTab $w={73}>2-用户年龄</SheetTab>
                        <SheetTab $w={49} $active>3-星座</SheetTab>
                        <SheetTab $w={73}>4-投资频次</SheetTab>
                        <AddSheet>
                            <svg width="14" height="14" viewBox="0 0 14 14"><circle cx="7" cy="7" r="6" fill="none" stroke="#777"/><path d="M3.500 7h7M7 3.500v7" stroke="#777"/></svg>
                        </AddSheet>
                        <Dots>⋮</Dots>
                        <HScroll>
                            <HEnd><svg width="4" height="7" viewBox="0 0 4 7"><path d="M4 0v7L0 3.500z" fill="#777"/></svg></HEnd>
                            <HThumb/>
                            <HEnd $end><svg width="4" height="7" viewBox="0 0 4 7"><path d="M0 0v7l4-3.500z" fill="#777"/></svg></HEnd>
                        </HScroll>
                    </TabStrip>
                </LeftCol>
                <Pane>
                    <PaneTitle>设置形状格式</PaneTitle>
                    <PaneTools>
                        <TinyCaret c="#666"/>
                        <svg width="9" height="9" viewBox="0 0 9 9"><path d="M1 1l7 7M8 1L1 8" stroke="#666" strokeWidth="1.200"/></svg>
                    </PaneTools>
                    <PaneTabs><PaneA/><PaneB/><PaneC/><PaneNotch/></PaneTabs>
                    <Section $mt={0}>
                        <SectionHead><Tri/>文本填充</SectionHead>
                        <RadioRow><Radio/><span>无填充(<Key>N</Key>)</span></RadioRow>
                        <RadioRow><Radio/><span>纯色填充(<Key>S</Key>)</span></RadioRow>
                        <RadioRow><Radio/><span>渐变填充(<Key>G</Key>)</span></RadioRow>
                        <RadioRow><Radio/><span>图片或纹理填充(<Key>P</Key>)</span></RadioRow>
                        <RadioRow><Radio/><span>图案填充(<Key>A</Key>)</span></RadioRow>
                    </Section>
                    <Section $mt={4}>
                        <SectionHead><Tri/>文本边框</SectionHead>
                        <RadioRow><Radio $on/><span>无线条(<Key>N</Key>)</span></RadioRow>
                        <RadioRow><Radio/><span>实线(<Key>S</Key>)</span></RadioRow>
                        <RadioRow><Radio/><span>渐变线(<Key>G</Key>)</span></RadioRow>
                    </Section>
                </Pane>
            </Work>
            <StatusBar>
                <Ready>就绪</Ready>
                <Stats>
                    <span>平均值: 20.31660406</span>
                    <span>计数: 26</span>
                    <span>求和: 243.7992488</span>
                </Stats>
                <ViewBtns>
                    <ViewBtn $on><svg width="12" height="11" viewBox="0 0 12 11"><path d="M0.500 0.500h11v10h-11zM0.500 3.800h11M0.500 7.200h11M4 0.500v10M8 0.500v10" fill="none" stroke="#7a7a7a"/></svg></ViewBtn>
                    <ViewBtn><svg width="12" height="11" viewBox="0 0 12 11"><path d="M0.500 0.500h11v10h-11zM3.500 2.500h5v6h-5z" fill="none" stroke="#7a7a7a"/></svg></ViewBtn>
                    <ViewBtn><svg width="12" height="11" viewBox="0 0 12 11"><path d="M0.500 0.500h11v10h-11zM0.500 6h11M5 0.500V6" fill="none" stroke="#7a7a7a"/></svg></ViewBtn>
                    <Zoom><span>−</span><ZoomLine/></Zoom>
                </ViewBtns>
                <Ime>
                    <svg width="14" height="14" viewBox="0 0 14 14" fill="#2a78e4"><ellipse cx="7" cy="10" rx="4" ry="3.200"/><circle cx="2.500" cy="6.500" r="1.500"/><circle cx="11.500" cy="6.500" r="1.500"/><circle cx="5" cy="3" r="1.500"/><circle cx="9" cy="3" r="1.500"/></svg>
                    <span>中</span>
                    <svg width="13" height="14" viewBox="0 0 13 14" fill="#2a78e4"><circle cx="3" cy="4" r="1.500"/><path d="M9 7c2 0 2 4-1 5 1-1 1-2 0-2.500-1-1 0-2.500 1-2.500z"/></svg>
                    <svg width="13" height="14" viewBox="0 0 13 14"><path d="M8 1a6 6 0 1 1-7 8 7 7 0 0 0 7-8z" fill="#2a78e4"/></svg>
                    <svg width="12" height="14" viewBox="0 0 12 14"><circle cx="6" cy="4.500" r="3" fill="none" stroke="#b9cff0" strokeWidth="1.300"/><path d="M1 13c.5-3 2.500-4.500 5-4.500s4.500 1.500 5 4.500" fill="none" stroke="#b9cff0" strokeWidth="1.300"/></svg>
                    <svg width="13" height="13" viewBox="0 0 13 13" fill="none" stroke="#2a78e4" strokeWidth="1.600"><rect x="1" y="1" width="4" height="4" rx="1"/><rect x="8" y="1" width="4" height="4" rx="1"/><rect x="1" y="8" width="4" height="4" rx="1"/><rect x="8" y="8" width="4" height="4" rx="1"/></svg>
                </Ime>
            </StatusBar>
            <Taskbar>
                <Pinned $w={46}><OrbIcon/></Pinned>
                <Pinned $w={47}><IeIcon/></Pinned>
                <Pinned $w={47}><NoteIcon/></Pinned>
                <Pinned $w={48}><ChromeIcon/></Pinned>
                <TaskBtn $w={106} $pl={7}><FolderIcon/>第1章_交互...</TaskBtn>
                <TaskBtn $w={106} $pl={7}><FolderIcon/>屏幕截图</TaskBtn>
                <TaskBtn $w={106} $ml={3} $pl={6}><ExcelIcon/>EXCEL综合...</TaskBtn>
                <Tray>
                    <TrayI w={15}><rect x="0" y="1" width="15" height="15" fill="#6db2f0"/><circle cx="7.500" cy="10" r="3" fill="#fff"/><circle cx="4" cy="6" r="1.300" fill="#fff"/><circle cx="11" cy="6" r="1.300" fill="#fff"/></TrayI>
                    <TrayI><circle cx="7" cy="9" r="6" fill="#2f5fb0" stroke="#d8e4f2"/><path d="M5.500 7a1.500 1.500 0 1 1 2.500 1c-.7.5-1 1-1 2M7 12v1" fill="none" stroke="#fff"/></TrayI>
                    <TrayI w={8}><path d="M3 2h4v4H3zM2 12h4l-2 3z" fill="#d5e4f0"/></TrayI>
                    <TrayI w={16}><rect x="0" y="2" width="16" height="15" fill="#d9dee4"/><path d="M3 7h10M8 5v10M8 6l-3 3h6z" fill="#c8282a" stroke="#c8282a"/></TrayI>
                    <TrayI><rect x="1" y="3" width="9" height="14" fill="#e9edf0"/><path d="M12 5v9" stroke="#e9edf0" strokeWidth="2"/><path d="M4 7h3v6H4z" fill="#4b5a68"/></TrayI>
                    <TrayI><path d="M3 2c-2 5-1 11 5 14l3-3-3-3-1 1c-1-2-1-3 0-4l1-1z" fill="#e6e9ec"/><circle cx="10" cy="13" r="3.500" fill="#cf2d2d"/></TrayI>
                    <TrayI w={16}><rect x="1" y="1" width="14" height="16" fill="#6d6d6d"/><circle cx="8" cy="10" r="5.500" fill="#b5342b"/></TrayI>
                    <TrayI w={16}><circle cx="8" cy="9" r="7.500" fill="#d9d022"/><path d="M8 5v8M4 9h8" stroke="#1f7a2d" strokeWidth="2.500"/></TrayI>
                    <TrayI w={12}><path d="M1 13h1.500v3H1zM4 11h1.500v5H4zM7 8h1.500v8H7zM10 5h1.500v11H10z" fill="#d5e1ea"/></TrayI>
                    <Clock>9:07<br/>2016/2/26</Clock>
                </Tray>
            </Taskbar>
        </Page>
    )
}
